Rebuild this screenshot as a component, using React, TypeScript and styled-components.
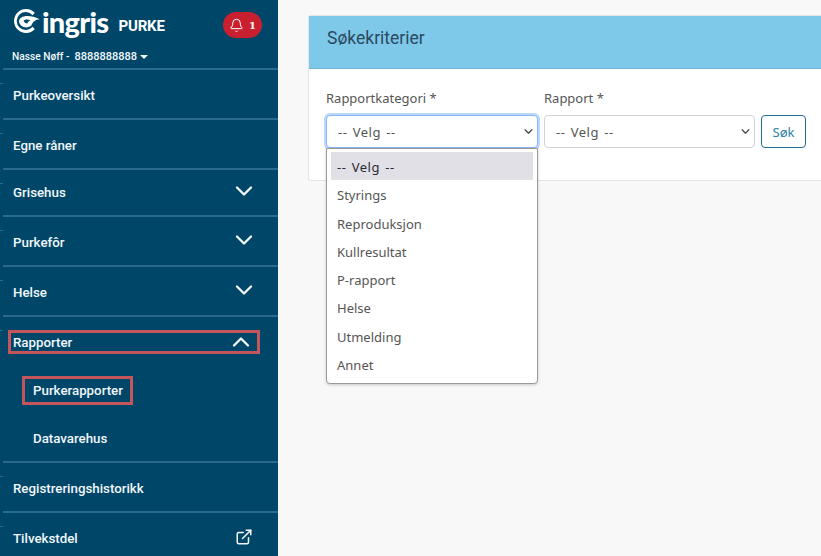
import styled, { createGlobalStyle } from 'styled-components'
import { Bell, ChevronDown, ChevronUp, ExternalLink } from 'lucide-react'

const GlobalStyle = createGlobalStyle`
  html, body {
    margin: 0;
    height: 100%;
    overflow: hidden;
  }
  body {
    font-family: "Noto Sans", "Open Sans", sans-serif;
    background: #f8f8f8;
  }
`

const chevron =
  "data:image/svg+xml,%3csvg xmlns='http://www.w3.org/2000/svg' viewBox='0 0 16 16'%3e%3cpath fill='none' stroke='%23444' stroke-linecap='round' stroke-linejoin='round' stroke-width='2.2' d='M2 5l6 6 6-6'/%3e%3c/svg%3e"

const Page = styled.div`
  display: flex;
  width: 821px;
  height: 556px;
  overflow: hidden;
`

const Sidebar = styled.nav`
  flex: none;
  width: 278px;
  height: 556px;
  overflow: hidden;
  background: #004669;
  color: #f2f7fa;
  font-family: Roboto, "Liberation Sans", sans-serif;
`

const Brand = styled.div`
  height: 68px;
  box-sizing: border-box;
  padding: 8px 16px 0 13px;
`

const BrandTop = styled.div`
  display: flex;
  align-items: center;
  height: 30px;
`

const LogoMark = styled.svg`
  flex: none;
  width: 27px;
  height: 24px;
  margin-top: -4px;
`

const LogoWord = styled.span`
  margin-left: 2px;
  margin-top: -3px;
  font-family: Lato, sans-serif;
  font-size: 29px;
  font-weight: 900;
  line-height: 30px;
  letter-spacing: -0.7px;
  color: #fff;
`

const Product = styled.span`
  margin-left: 10px;
  margin-top: 6px;
  font-size: 15px;
  font-weight: 700;
  letter-spacing: -0.2px;
  color: #fff;
`

const Alerts = styled.div`
  display: flex;
  align-items: center;
  justify-content: center;
  gap: 5px;
  width: 39px;
  height: 26px;
  margin-left: auto;
  margin-top: 4px;
  border-radius: 13px;
  background: #c8202f;
  color: #fff;
`

const AlertCount = styled.span`
  font-family: "DejaVu Serif", serif;
  font-size: 10px;
  font-weight: 700;
`

const UserLine = styled.div`
  display: flex;
  align-items: center;
  margin-top: 12px;
  margin-left: -1px;
  font-size: 11px;
  font-weight: 500;
`

const UserName = styled.span`
  margin-right: 5px;
  font-size: 10.2px;
`

const Caret = styled.span`
  width: 0;
  height: 0;
  margin-left: 3px;
  border-top: 4px solid #f2f7fa;
  border-left: 4px solid transparent;
  border-right: 4px solid transparent;
`

const Row = styled.div<{ $height: number; $compact?: boolean }>`
  position: relative;
  display: flex;
  align-items: center;
  justify-content: space-between;
  box-sizing: border-box;
  height: ${(p) => p.$height}px;
  margin-left: 3px;
  padding: ${(p) => (p.$compact ? '1px 20px 1px 10px' : '2px 20px 0 10px')};
  border-top: 2px solid #2a6a8c;
  font-size: 13.3px;
  font-weight: 500;

  &::before {
    content: '';
    position: absolute;
    left: -3px;
    top: 13px;
    width: 3px;
    height: 1px;
    background: #2a6a8c;
  }
`

const Group = styled.div`
  position: relative;
  height: 146px;
  box-sizing: border-box;
  margin-left: 3px;
  border-top: 2px solid #2a6a8c;
  font-size: 13.3px;
  font-weight: 500;

  &::before {
    content: '';
    position: absolute;
    left: -3px;
    top: 13px;
    width: 3px;
    height: 1px;
    background: #2a6a8c;
  }
`

const Marked = styled.div`
  display: flex;
  align-items: center;
  justify-content: space-between;
  box-sizing: border-box;
  width: 252px;
  height: 24px;
  margin: 13px 0 0 5px;
  padding: 0 2px 0 2px;
  border: 3px solid #c4555b;
`

const SubList = styled.div`
  display: flex;
  flex-direction: column;
  align-items: flex-start;
  margin: 22px 0 0 19px;
`

const SubItem = styled.div<{ $marked?: boolean }>`
  display: flex;
  align-items: center;
  box-sizing: border-box;
  height: 29px;
  padding: 0 7px 0 8px;
  border: 3px solid ${(p) => (p.$marked ? '#c4555b' : 'transparent')};
  & + & {
    margin-top: 19px;
  }
`

const OpenChevron = styled(ChevronDown)`
  margin: -6px 0 -2px;
`

const CloseChevron = styled(ChevronUp)`
  margin: -4px 0 -4px;
`

const LinkIcon = styled(ExternalLink)`
  margin: -2px 5px 0 0;
`

const Main = styled.main`
  flex: 1;
  min-width: 0;
  padding: 15px 0 0 30px;
`

const Card = styled.section`
  height: 166px;
  box-sizing: border-box;
  background: #fff;
  border: 1px solid #e3e5e7;
  border-right: 0;
  border-radius: 3px 0 0 3px;
`

const CardHeader = styled.header`
  display: flex;
  align-items: center;
  height: 53px;
  box-sizing: border-box;
  padding: 0 0 8px 18px;
  background: #7ec8ea;
  border-bottom: 1px solid #6fb6d8;
  font-family: Roboto, sans-serif;
  font-size: 17.5px;
  font-weight: 400;
  color: #2b4a60;
`

const Form = styled.form`
  display: flex;
  align-items: flex-end;
  gap: 6px;
  padding: 20px 0 0 17px;
`

const Field = styled.div<{ $width: number }>`
  position: relative;
  width: ${(p) => p.$width}px;
`

const Label = styled.label`
  display: block;
  margin-bottom: 7px;
  font-size: 13px;
  line-height: 19px;
  color: #555;
`

const Select = styled.select<{ $focused?: boolean }>`
  display: block;
  width: 100%;
  height: 33px;
  box-sizing: border-box;
  padding: 0 24px 0 11px;
  appearance: none;
  background: #fff url("${chevron}") no-repeat right 4px center / 9px 9px;
  border: 1px solid ${(p) => (p.$focused ? '#86b7fe' : '#ced4da')};
  border-radius: 4px;
  box-shadow: ${(p) => (p.$focused ? '0 0 0 2px rgba(120, 180, 250, 0.5)' : 'none')};
  font-family: inherit;
  font-size: 13px;
  letter-spacing: 0.5px;
  word-spacing: 1.5px;
  color: #555;
  outline: none;
`

const Button = styled.button`
  width: 45px;
  height: 33px;
  padding: 0;
  background: #fff;
  border: 1px solid #1f6f8b;
  border-radius: 4px;
  font-family: inherit;
  font-size: 13px;
  color: #2d7fa3;
`

const Listbox = styled.ul`
  position: absolute;
  top: 100%;
  left: 0;
  width: 100%;
  height: 236px;
  box-sizing: border-box;
  margin: 0;
  padding: 3px 4px;
  list-style: none;
  background: #fff;
  border: 1px solid #9a9a9a;
  border-radius: 0 0 4px 4px;
  box-shadow: 0 1px 3px rgba(0, 0, 0, 0.2);
`

const Option = styled.li<{ $active?: boolean }>`
  height: 28.3px;
  line-height: 30px;
  padding-left: 6px;
  font-size: 13px;
  letter-spacing: ${(p) => (p.$active ? '0.5px' : '0')};
  word-spacing: ${(p) => (p.$active ? '1.5px' : '0')};
  color: ${(p) => (p.$active ? '#2a2a33' : '#555')};
  background: ${(p) => (p.$active ? '#e0e0e6' : 'transparent')};
`

const options = ['-- Velg --', 'Styrings', 'Reproduksjon', 'Kullresultat', 'P-rapport', 'Helse', 'Utmelding', 'Annet']

export default function App() {
  return (
    <Page>
      <GlobalStyle />
      <Sidebar>
        <Brand>
          <BrandTop>
            <LogoMark viewBox="0 0 27 24">
              <path d="M21.8 3.8A12 12 0 1 0 21.8 20.2L19.6 17.8A9 9 0 1 1 19.6 6.2Z" fill="#fff" />
              <path d="M6 12C6.4 7.4 15 4.6 26.8 10.2 22 10.4 19.6 13 18.4 16.6 14 20.4 6.2 17.8 6 12Z" fill="#fff" />
              <path d="M10.6 11.8C12.2 10.2 14.8 10.2 17.4 11.2 15.6 12 14.8 13.2 14.2 14.6 12.6 14.6 11.2 13.4 10.6 11.8Z" fill="#004669" />
            </LogoMark>
            <LogoWord>ingris</LogoWord>
            <Product>PURKE</Product>
            <Alerts>
              <Bell size={15} strokeWidth={1.6} />
              <AlertCount>1</AlertCount>
            </Alerts>
          </BrandTop>
          <UserLine>
            <UserName>Nasse Nøff -</UserName>
            <span>8888888888</span>
            <Caret />
          </UserLine>
        </Brand>
        <Row $height={50}>Purkeoversikt</Row>
        <Row $height={50}>Egne råner</Row>
        <Row $height={47} $compact>
          Grisehus
          <OpenChevron size={28} strokeWidth={2} />
        </Row>
        <Row $height={50}>
          Purkefôr
          <OpenChevron size={28} strokeWidth={2} />
        </Row>
        <Row $height={50}>
          Helse
          <OpenChevron size={28} strokeWidth={2} />
        </Row>
        <Group>
          <Marked>
            Rapporter
            <CloseChevron size={28} strokeWidth={2} />
          </Marked>
          <SubList>
            <SubItem $marked>Purkerapporter</SubItem>
            <SubItem>Datavarehus</SubItem>
          </SubList>
        </Group>
        <Row $height={50}>Registreringshistorikk</Row>
        <Row $height={50}>
          Tilvekstdel
          <LinkIcon size={18} strokeWidth={2} />
        </Row>
      </Sidebar>
      <Main>
        <Card>
          <CardHeader>Søkekriterier</CardHeader>
          <Form>
            <Field $width={212}>
              <Label>Rapportkategori *</Label>
              <Select $focused>
                <option>-- Velg --</option>
              </Select>
              <Listbox>
                {options.map((option, i) => (
                  <Option key={option} $active={i === 0}>
                    {option}
                  </Option>
                ))}
              </Listbox>
            </Field>
            <Field $width={211}>
              <Label>Rapport *</Label>
              <Select>
                <option>-- Velg --</option>
              </Select>
            </Field>
            <Button type="button">Søk</Button>
          </Form>
        </Card>
      </Main>
    </Page>
  )
}
